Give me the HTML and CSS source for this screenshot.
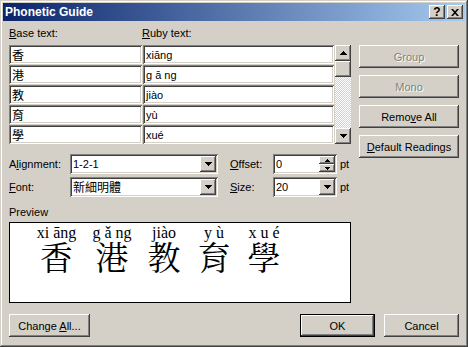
FILE: index.html
```html
<!DOCTYPE html>
<html lang="zh-Hant">
<head>
  <meta charset="UTF-8">
  <title>Phonetic Guide</title>
  <link rel="stylesheet" href="styles.css">
</head>
<body>
  <div class="window">
    <div class="titlebar">
      <span class="title">Phonetic Guide</span>
      <div class="caption-btns">
        <span class="cap cap-help">?</span>
        <span class="cap">
          <svg width="8" height="7" viewBox="0 0 8 7"><path d="M0 0h2l2 2.2L6 0h2L5 3.5 8 7H6L4 4.8 2 7H0l3-3.5z" fill="#000"/></svg>
        </span>
      </div>
    </div>

    <div class="client">
      <div class="top">
        <div class="left">
          <div class="heads">
            <span class="head-base"><u>B</u>ase text:</span>
            <span><u>R</u>uby text:</span>
          </div>

          <div class="list">
            <div class="cells">
              <div class="field cjk">香</div><div class="field">xiāng</div>
              <div class="field cjk">港</div><div class="field">g ā ng</div>
              <div class="field cjk">教</div><div class="field">jiào</div>
              <div class="field cjk">育</div><div class="field">yù</div>
              <div class="field cjk">學</div><div class="field">xué</div>
            </div>
            <div class="vscroll">
              <span class="sb-btn">
                <svg width="7" height="4" viewBox="0 0 7 4"><path d="M3 0h1v1h1v1h1v1h1v1H0V3h1V2h1V1h1z" fill="#000"/></svg>
              </span>
              <span class="sb-thumb"></span>
              <span class="sb-track"></span>
              <span class="sb-btn">
                <svg width="7" height="4" viewBox="0 0 7 4"><path d="M0 0h7v1H6v1H5v1H4v1H3V3H2V2H1V1H0z" fill="#000"/></svg>
              </span>
            </div>
          </div>

          <div class="opts">
            <div class="opt-row">
              <span class="opt-label">A<u>l</u>ignment:</span>
              <div class="combo">
                <span class="combo-val">1-2-1</span>
                <span class="drop">
                  <svg width="7" height="4" viewBox="0 0 7 4"><path d="M0 0h7v1H6v1H5v1H4v1H3V3H2V2H1V1H0z" fill="#000"/></svg>
                </span>
              </div>
              <span class="opt-label2"><u>O</u>ffset:</span>
              <div class="combo spin">
                <span class="combo-val">0</span>
                <span class="spin-btns">
                  <span class="spin-btn">
                    <svg width="5" height="3" viewBox="0 0 5 3"><path d="M2 0h1v1h1v1h1v1H0V2h1V1h1z" fill="#000"/></svg>
                  </span>
                  <span class="spin-btn">
                    <svg width="5" height="3" viewBox="0 0 5 3"><path d="M0 0h5v1H4v1H3v1H2V2H1V1H0z" fill="#000"/></svg>
                  </span>
                </span>
              </div>
              <span class="pt">pt</span>
            </div>
            <div class="opt-row">
              <span class="opt-label"><u>F</u>ont:</span>
              <div class="combo">
                <span class="combo-val cjk">新細明體</span>
                <span class="drop">
                  <svg width="7" height="4" viewBox="0 0 7 4"><path d="M0 0h7v1H6v1H5v1H4v1H3V3H2V2H1V1H0z" fill="#000"/></svg>
                </span>
              </div>
              <span class="opt-label2"><u>S</u>ize:</span>
              <div class="combo spin">
                <span class="combo-val">20</span>
                <span class="drop">
                  <svg width="7" height="4" viewBox="0 0 7 4"><path d="M0 0h7v1H6v1H5v1H4v1H3V3H2V2H1V1H0z" fill="#000"/></svg>
                </span>
              </div>
              <span class="pt">pt</span>
            </div>
          </div>

          <div class="preview-label">Preview</div>
          <div class="preview">
            <div class="pv-row">
              <div class="pv-col"><div class="pv-rt">xi āng</div><div class="pv-rb">香</div></div>
              <div class="pv-col"><div class="pv-rt">g ǎ ng</div><div class="pv-rb">港</div></div>
              <div class="pv-col"><div class="pv-rt">jiào</div><div class="pv-rb">教</div></div>
              <div class="pv-col"><div class="pv-rt">y ù</div><div class="pv-rb">育</div></div>
              <div class="pv-col"><div class="pv-rt">x u é</div><div class="pv-rb">學</div></div>
            </div>
          </div>
        </div>

        <div class="side">
          <button class="btn" disabled>Group</button>
          <button class="btn" disabled>Mono</button>
          <button class="btn">Remo<u>v</u>e All</button>
          <button class="btn"><u>D</u>efault Readings</button>
        </div>
      </div>

      <div class="bottom">
        <button class="btn btn-change">Change <u>A</u>ll...</button>
        <button class="btn btn-ok">OK</button>
        <button class="btn btn-cancel">Cancel</button>
      </div>
    </div>
  </div>
</body>
</html>
```

FILE: styles.css
```css
* {
  box-sizing: border-box;
}
body {
  margin: 0;
  font-family: "Liberation Sans", Arial, sans-serif;
  font-size: 11px;
  color: #000;
  background: #d4d0c8;
}
u {
  text-decoration: underline;
  text-underline-offset: 1px;
}
.cjk {
  font-family: "Noto Sans CJK TC", sans-serif;
}

/* window frame */
.window {
  width: 468px;
  height: 347px;
  padding: 3px;
  background: #d4d0c8;
  box-shadow: inset -1px -1px #404040, inset 1px 1px #d4d0c8,
              inset -2px -2px #808080, inset 2px 2px #fff;
}
.titlebar {
  height: 18px;
  margin-bottom: 1px;
  display: flex;
  align-items: center;
  padding: 0 2px;
  background: linear-gradient(to right, #0a246a, #a6caf0);
  color: #fff;
  font-weight: bold;
  font-size: 12px;
}
.caption-btns {
  margin-left: auto;
  display: flex;
  gap: 2px;
}
.cap {
  width: 16px;
  height: 14px;
  display: flex;
  align-items: center;
  justify-content: center;
  background: #d4d0c8;
  box-shadow: inset -1px -1px #404040, inset 1px 1px #fff,
              inset -2px -2px #808080;
}
.cap-help {
  color: #000;
  font-size: 12px;
  font-weight: bold;
}

/* raised / sunken bits */
.btn, .sb-btn, .sb-thumb, .drop, .spin-btn {
  background: #d4d0c8;
  box-shadow: inset -1px -1px #404040, inset 1px 1px #fff,
              inset -2px -2px #808080;
}
.field, .combo {
  background: #fff;
  box-shadow: inset 1px 1px #808080, inset -1px -1px #fff,
              inset 2px 2px #404040, inset -2px -2px #d4d0c8;
}

.client {
  padding: 5px 6px 0 6px;
}
.top {
  display: flex;
  gap: 8px;
}
.left {
  width: 342px;
}
.heads {
  height: 18px;
  display: flex;
  line-height: 13px;
}
.head-base {
  width: 133px;
}

.list {
  display: flex;
  gap: 1px;
  height: 99px;
}
.cells {
  display: grid;
  grid-template-columns: 133px 191px;
  grid-auto-rows: 19px;
  gap: 1px;
}
.field {
  display: flex;
  align-items: center;
  padding-left: 3px;
  white-space: pre;
}
.field.cjk {
  font-size: 12px;
}
.vscroll {
  width: 16px;
  display: flex;
  flex-direction: column;
}
.sb-btn {
  height: 16px;
  display: flex;
  align-items: center;
  justify-content: center;
}
.sb-thumb {
  height: 16px;
}
.sb-track {
  flex: 1;
  background: repeating-conic-gradient(#d4d0c8 0 25%, #fff 0 50%) 0 0 / 2px 2px;
}

.opts {
  margin-top: 10px;
  display: flex;
  flex-direction: column;
  gap: 3px;
}
.opt-row {
  display: flex;
  align-items: center;
  height: 20px;
}
.opt-label {
  width: 61px;
}
.opt-label2 {
  width: 43px;
  margin-left: 12px;
}
.combo {
  width: 148px;
  height: 20px;
  padding: 2px;
  display: flex;
}
.combo-val {
  flex: 1;
  padding-left: 1px;
  line-height: 16px;
}
.combo-val.cjk {
  font-size: 12px;
}
.drop {
  width: 16px;
  height: 16px;
  display: flex;
  align-items: center;
  justify-content: center;
}
.spin {
  width: 64px;
}
.spin-btns {
  width: 16px;
  display: flex;
  flex-direction: column;
}
.spin-btn {
  height: 8px;
  display: flex;
  align-items: center;
  justify-content: center;
}
.pt {
  margin-left: 3px;
}

.preview-label {
  margin-top: 9px;
  line-height: 13px;
}
.preview {
  margin-top: 3px;
  height: 81px;
  border: 1px solid #000;
  background: #fff;
}
.pv-row {
  display: grid;
  grid-template-columns: 57px 54px 50px 50px 50px;
  padding: 3px 0 0 18px;
}
.pv-col {
  text-align: center;
}
.pv-rt {
  font-family: "Liberation Serif", serif;
  font-size: 16px;
  line-height: 14px;
  height: 14px;
  white-space: pre;
}
.pv-rb {
  font-family: "Noto Serif CJK TC", "Noto Sans CJK TC", serif;
  font-size: 33px;
  line-height: 32px;
  height: 32px;
}

/* buttons */
.btn {
  border: 0;
  padding: 0;
  height: 23px;
  font: inherit;
  color: #000;
}
.btn:disabled {
  color: #808080;
  text-shadow: 1px 1px #fff;
}
.side {
  width: 100px;
  padding-top: 18px;
  display: flex;
  flex-direction: column;
  gap: 7px;
}
.bottom {
  margin-top: 11px;
  display: flex;
}
.btn-change {
  width: 81px;
}
.btn-ok {
  width: 75px;
  margin-left: auto;
  box-shadow: inset 0 0 0 1px #000, inset -2px -2px #404040,
              inset 2px 2px #fff, inset -3px -3px #808080;
}
.btn-cancel {
  width: 75px;
  margin-left: 9px;
}
```
